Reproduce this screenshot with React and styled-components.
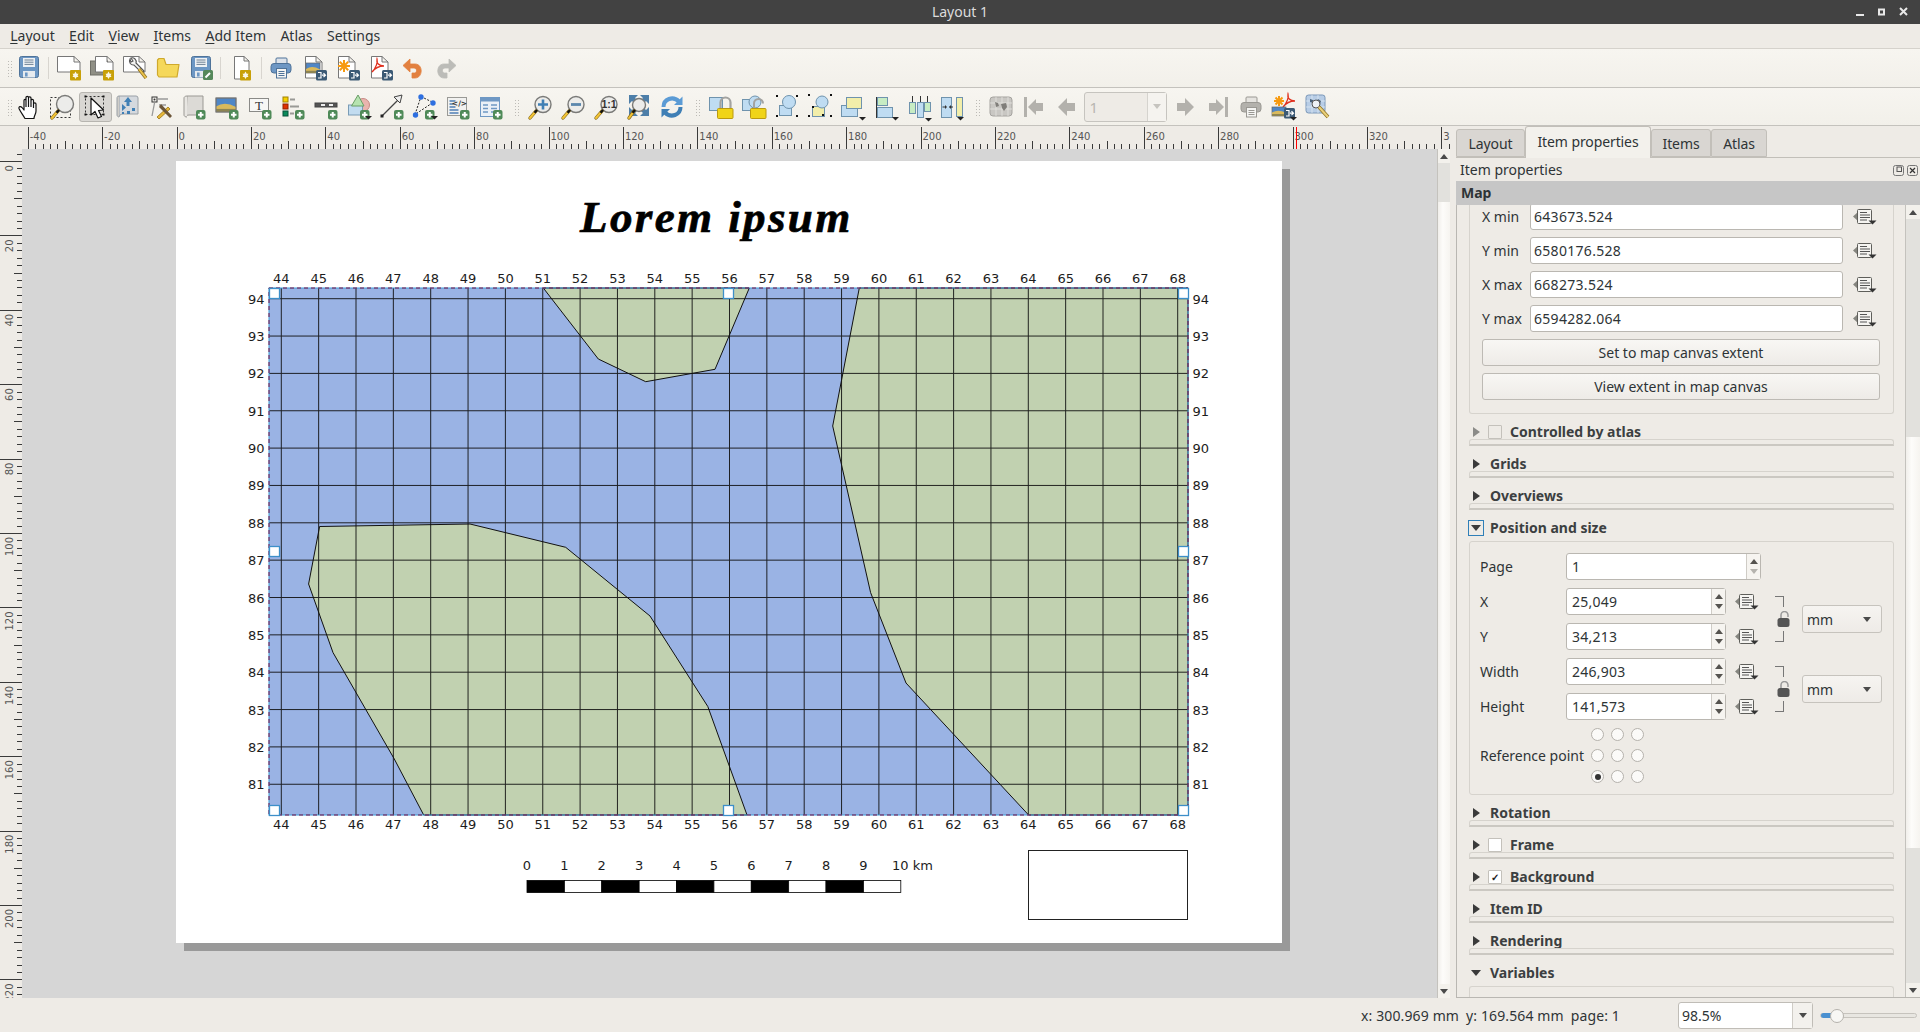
import React from 'react';
import styled, { createGlobalStyle } from 'styled-components';

/*global*/
const Global = createGlobalStyle`
html, body { margin: 0; padding: 0; height: 100%; overflow: hidden; background: #eeebe6; }
#root { height: 100%; }
* { box-sizing: border-box; }
`;

const UI_FONT = '"Noto Sans", "Open Sans", sans-serif';

const Window = styled.div`
width: 1920px;
height: 1032px;
display: flex;
flex-direction: column;
font-family: ${UI_FONT};
font-size: 14px;
color: #2e3436;
background: #eeebe6;
overflow: hidden;
`;

/*title bar*/
const TitleBar = styled.div`
height: 24px;
flex: none;
background: #424242;
color: #dcdcdc;
display: flex;
align-items: center;
justify-content: center;
position: relative;
font-size: 14px;
padding-bottom: 2px;
`;
const WinControls = styled.svg`
position: absolute;
right: 4px;
top: 0;
width: 60px;
height: 24px;
`;

const MenuBar = styled.div`
height: 25px;
flex: none;
display: flex;
align-items: center;
padding: 0 0 2px 3px;
border-bottom: 1px solid #d5d2cc;
`;
const MenuItem = styled.span`
padding: 0 7.2px;
span { text-decoration: underline; text-underline-offset: 2px; text-decoration-thickness: 1px; }
`;

/*toolbars*/
const ToolBar = styled.div`
height: ${p => p.$h}px;
flex: none;
display: flex;
align-items: center;
padding-left: 12.5px;
position: relative;
background: linear-gradient(#f7f5f0, #f2f0ea);
border-bottom: 1px solid #c4c2bd;
`;
const Tool = styled.div`
width: 33px;
height: 30px;
flex: none;
display: flex;
align-items: center;
justify-content: center;
border-radius: 3px;
border: 1px solid ${p => (p.$on ? '#b7b5b0' : 'transparent')};
background: ${p => (p.$on ? '#d9d7d3' : 'transparent')};
`;
const Glyph = styled.svg`
width: 26px;
height: 26px;
flex: none;
overflow: visible;
`;
const Sep = styled.div`
width: ${p => p.$w}px;
height: 22px;
flex: none;
display: flex;
justify-content: center;
&::after { content: ''; width: 1px; background: #d8d5cf; }
`;
const Grip = styled.div`
width: ${p => p.$w}px;
height: 22px;
flex: none;
background-image: radial-gradient(circle, #bdbbb6 0.8px, transparent 1px);
background-size: 3px 3px;
background-repeat: repeat;
background-clip: content-box;
padding: 2px ${p => (p.$w - 6) / 2}px;
`;
const StartGrip = styled(Grip)`
position: absolute;
left: 4px;
top: 8px;
`;
const PageCombo = styled.div`
width: 83px;
height: 30px;
flex: none;
margin-right: 2px;
display: flex;
border: 1px solid #c6c4bf;
border-radius: 3px;
color: #b8b6b1;
font-size: 15px;
background: #eeebe6;
`;
const PageComboValue = styled.div`
flex: 1;
padding-left: 5px;
line-height: 28px;
`;
const PageComboArrow = styled.div`
width: 19px;
border-left: 1px solid #d5d3ce;
background: #f5f3ef;
display: flex;
align-items: center;
justify-content: center;
&::after { content: ''; border: 4px solid transparent; border-top: 5px solid #c6c4bf; border-bottom: 0; }
`;

/*main area*/
const Main = styled.div`
flex: 1;
display: flex;
min-height: 0;
`;
const LayoutPane = styled.div`
width: 1450px;
flex: none;
display: flex;
flex-direction: column;
`;
const HRuler = styled.svg`
display: block;
width: 1450px;
height: 23px;
flex: none;
font-family: "DejaVu Sans", sans-serif;
font-size: 10px;
`;
const CanvasRow = styled.div`
flex: 1;
display: flex;
min-height: 0;
`;
const VRuler = styled.svg`
display: block;
width: 22px;
height: 849px;
flex: none;
font-family: "DejaVu Sans", sans-serif;
font-size: 10px;
`;
const Canvas = styled.div`
width: 1415px;
flex: none;
background: #d6d6d6;
padding: 12px 0 0 154px;
overflow: hidden;
`;
const Sheet = styled.div`
width: 1106px;
height: 782px;
background: #fff;
position: relative;
box-shadow: 8px 8px 0 #999;
`;
const SheetTitle = styled.div`
position: absolute;
left: 404px;
top: 34px;
font: italic bold 45px/1 "Liberation Serif", serif;
letter-spacing: 2.4px;
-webkit-text-stroke: 0.7px #000;
color: #000;
white-space: nowrap;
`;
const MapDrawing = styled.svg`
position: absolute;
left: 54px;
top: 101px;
width: 1000px;
height: 640px;
font-family: "DejaVu Sans", sans-serif;
font-size: 13px;
fill: #1c1c1c;
`;
const LegendBox = styled.div`
position: absolute;
left: 852px;
top: 689px;
width: 160px;
height: 70px;
background: #fff;
border: 1.5px solid #222;
`;

const VScroll = styled.div`
width: ${p => p.$w}px;
flex: none;
display: flex;
flex-direction: column;
background: linear-gradient(90deg, #f1efeb, #fdfcfa 40%, #f6f4f0);
border-left: 1px solid #c4c2bd;
`;
const ScrollBtn = styled.div`
height: 14px;
flex: none;
display: flex;
align-items: center;
justify-content: center;
background: #f3f1ec;
&::after {
  content: '';
  border: 4px solid transparent;
  ${p => (p.$down ? 'border-top: 5px solid #4a4a4a; border-bottom: 0;' : 'border-bottom: 5px solid #4a4a4a; border-top: 0;')}
}
`;
const ScrollTrough = styled.div`
height: ${p => p.$h}px;
flex: ${p => (p.$h ? 'none' : 1)};
background: ${p => (p.$thumb ? 'linear-gradient(90deg, #f1efeb, #fdfcfa 40%, #f6f4f0)' : '#e2e1dd')};
`;

/*side panel*/
const SidePanel = styled.div`
flex: 1;
display: flex;
flex-direction: column;
padding-left: 6px;
min-width: 0;
`;
const TabBar = styled.div`
height: 32px;
flex: none;
display: flex;
align-items: flex-end;
border-bottom: 1px solid #c2bfb9;
`;
const Tab = styled.div`
width: ${p => p.$w}px;
height: ${p => (p.$on ? 32 : 28)}px;
margin-bottom: ${p => (p.$on ? -1 : 0)}px;
padding-bottom: ${p => (p.$on ? 3 : 0)}px;
display: flex;
align-items: center;
justify-content: center;
letter-spacing: -0.1px;
border: 1px solid #c2bfb9;
border-bottom: ${p => (p.$on ? 'none' : '1px solid #c2bfb9')};
border-radius: 3px 3px 0 0;
background: ${p => (p.$on ? '#f3f1ec' : '#d9d6d2')};
color: #2e3436;
`;
const DockTitle = styled.div`
height: 23px;
flex: none;
display: flex;
align-items: center;
justify-content: space-between;
padding: 0 1px 0 4px;
`;
const DockButtons = styled.svg`
width: 26px;
height: 14px;
`;
const MapBar = styled.div`
height: 24px;
flex: none;
background: #c6c6c6;
font-weight: 700;
padding-left: 5px;
line-height: 24px;
color: #2e3436;
`;
const ScrollArea = styled.div`
flex: 1;
min-height: 0;
display: flex;
border-left: 1px solid #b9b7b2;
border-bottom: 1px solid #b9b7b2;
`;
const ScrollContent = styled.div`
width: 448px;
flex: none;
padding-left: 12px;
overflow: hidden;
`;
const ExtentBox = styled.div`
width: 425px;
padding: 0 13px 13px 12px;
border: 1px solid #d6d3cd;
border-top: none;
border-radius: 0 0 3px 3px;
display: flex;
flex-direction: column;
gap: 7px;
`;
const ExtentRow = styled.div`
display: flex;
align-items: center;
height: 27px;
flex: none;
&:first-child { margin-top: -2px; }
`;
const ExtentLabel = styled.div`
width: 48px;
flex: none;
`;
const LineEdit = styled.div`
width: ${p => p.$w}px;
height: 27px;
flex: none;
background: #fff;
border: 1px solid #bab7b1;
border-radius: 3px;
padding-left: 3px;
line-height: 25px;
font-size: 14px;
letter-spacing: 0.3px;
`;
const DDButton = styled.svg`
width: 24px;
height: 16px;
flex: none;
margin-left: ${p => p.$gap || 0}px;
`;
const PushButton = styled.div`
width: 398px;
height: 27px;
flex: none;
border: 1px solid #bdbab4;
border-radius: 3px;
background: linear-gradient(#f8f7f4, #eeebe7);
display: flex;
align-items: center;
justify-content: center;
`;
const GroupHead = styled.div`
width: 425px;
height: ${p => (p.$open ? 31 : 32)}px;
flex: none;
position: relative;
display: flex;
align-items: center;
padding-top: ${p => (p.$open ? 4 : 3)}px;
font-weight: 700;
color: #3c3f41;
${p => !p.$open && `
  &::after {
    content: '';
    position: absolute;
    left: 0;
    right: 0;
    bottom: 0;
    height: 4px;
    border: 1px solid #d6d3cd;
    border-bottom: 2px solid #cbc8c2;
    border-radius: 3px 3px 0 0;
    background: #eeebe6;
  }
`}
`;
const ArrowSlot = styled.div`
width: 16px;
height: 16px;
flex: none;
margin-left: -1px;
margin-right: ${p => (p.$check ? 4 : 6)}px;
display: flex;
align-items: center;
justify-content: center;
border: 1px solid ${p => (p.$focus ? '#2f7fb8' : 'transparent')};
&::after {
  content: '';
  ${p => (p.$open
    ? `border-left: 5px solid transparent; border-right: 5px solid transparent; border-top: 6px solid #3a3a3a;`
    : `border-top: 5px solid transparent; border-bottom: 5px solid transparent; border-left: 7px solid ${p.$dim ? '#8b8b88' : '#3a3a3a'};`)}
}
`;
const CheckBox = styled.div`
width: 14px;
height: 14px;
flex: none;
margin-right: 8px;
border: 1px solid #c4c1bb;
border-radius: 1px;
background: ${p => (p.$dim ? 'transparent' : '#fff')};
display: flex;
align-items: center;
justify-content: center;
font-size: 10px;
line-height: 1;
font-weight: 700;
color: #222;
`;
const PosBox = styled.div`
width: 425px;
height: 254px;
flex: none;
border: 1px solid #d6d3cd;
border-radius: 3px;
padding: 11px 0 0 10px;
`;
const PosGrid = styled.div`
display: grid;
grid-template-columns: 86px 160px 42px 34px 80px;
grid-auto-rows: 27px;
row-gap: 8px;
align-items: center;
`;
const SpinBox = styled.div`
width: ${p => p.$w}px;
height: 27px;
display: flex;
background: #fff;
border: 1px solid #bab7b1;
border-radius: 3px;
`;
const SpinValue = styled.div`
flex: 1;
padding-left: 5px;
line-height: 25px;
letter-spacing: 0.25px;
`;
const SpinArrows = styled.div`
width: 14px;
flex: none;
border-left: 1px solid #cfccc6;
background: #f6f4f0;
display: flex;
flex-direction: column;
align-items: center;
justify-content: center;
gap: 5px;
`;
const SpinUp = styled.div`
border: 4px solid transparent;
border-top: 0;
border-bottom: 5px solid #55534f;
`;
const SpinDown = styled.div`
border: 4px solid transparent;
border-bottom: 0;
border-top: 5px solid ${p => (p.$dim ? '#b5b3ae' : '#55534f')};
`;
const LockCell = styled.div`
grid-row: span 2;
height: 62px;
padding: 8px 0 0 7px;
display: flex;
flex-direction: column;
`;
const Bracket = styled.div`
width: 9px;
height: 11px;
flex: none;
border-right: 1.5px solid #777;
${p => (p.$bottom ? 'border-bottom: 1.5px solid #777;' : 'border-top: 1.5px solid #777;')}
`;
const LockIcon = styled.svg`
width: 13px;
height: 16px;
margin: 4px 0 4px 2px;
flex: none;
`;
const UnitCell = styled.div`
grid-row: span 2;
`;
const UnitCombo = styled.div`
width: 80px;
height: 28px;
border: 1px solid #c6c3bd;
border-radius: 3px;
background: linear-gradient(#f6f4f1, #eeebe7);
display: flex;
align-items: center;
justify-content: space-between;
padding: 0 10px 0 4px;
&::after { content: ''; border: 4px solid transparent; border-top: 5px solid #4a4a4a; border-bottom: 0; }
`;
const RefRow = styled.div`
display: flex;
align-items: center;
margin-top: 8px;
`;
const RefLabel = styled.div`
width: 111px;
flex: none;
`;
const RadioGrid = styled.div`
display: grid;
grid-template-columns: repeat(3, 13px);
grid-auto-rows: 13px;
column-gap: 7px;
row-gap: 8px;
`;
const Radio = styled.div`
width: 13px;
height: 13px;
border-radius: 50%;
border: 1px solid #b5b2ac;
background: #fbfaf8;
display: flex;
align-items: center;
justify-content: center;
&::after { content: ''; width: 6px; height: 6px; border-radius: 50%; background: ${p => (p.$on ? '#333' : 'transparent')}; }
`;
const VarBox = styled.div`
width: 425px;
height: 14px;
flex: none;
border: 1px solid #d6d3cd;
border-bottom: none;
border-radius: 3px 3px 0 0;
`;

/*status bar*/
const StatusBar = styled.div`
height: 34px;
flex: none;
display: flex;
align-items: center;
padding-right: 3px;
`;
const Coord = styled.span`
margin-right: ${p => p.$gap}px;
white-space: nowrap;
letter-spacing: 0.12px;
`;
const CoordGroup = styled.div`
margin-left: auto;
display: flex;
margin-right: 58px;
`;
const ZoomCombo = styled.div`
width: 135px;
height: 27px;
flex: none;
display: flex;
background: #fff;
border: 1px solid #c0bdb7;
border-radius: 3px;
`;
const ZoomValue = styled.div`
flex: 1;
padding-left: 3px;
line-height: 25px;
`;
const ZoomArrow = styled.div`
width: 20px;
border-left: 1px solid #cfccc6;
background: #f3f1ed;
display: flex;
align-items: center;
justify-content: center;
&::after { content: ''; border: 4px solid transparent; border-top: 5px solid #4a4a4a; border-bottom: 0; }
`;
const Slider = styled.div`
width: 97px;
height: 5px;
flex: none;
margin-left: 7px;
border: 1px solid #c6c3bd;
border-radius: 3px;
background: #e8e6e1;
position: relative;
&::before {
  content: '';
  position: absolute;
  left: 0;
  top: -1px;
  width: 12px;
  height: 5px;
  background: #4a90d0;
  border-radius: 3px;
}
&::after {
  content: '';
  position: absolute;
  left: 9px;
  top: -5px;
  width: 12px;
  height: 12px;
  border-radius: 50%;
  border: 1px solid #b5b2ac;
  background: #f8f7f4;
}
`;

/*icon parts*/
const plus = (x = 15, y = 16) => (
  <g transform={`translate(${x} ${y})`}>
    <rect width="9.5" height="9.5" rx="2" fill="#4f8a58" />
    <path d="M4.75 2v5.5M2 4.75h5.5" stroke="#fff" strokeWidth="2" />
  </g>
);
const star = (x = 16, y = 15) => (
  <g transform={`translate(${x} ${y})`}>
    <rect width="11" height="10.5" rx="1" fill="#c8a008" />
    <path d="M5.5 1.5 8.5 7H2.5ZM5.5 9 2.5 3.7H8.5Z" fill="#fff" opacity=".9" />
  </g>
);
const exportBadge = (x = 15, y = 15) => (
  <g transform={`translate(${x} ${y})`}>
    <rect width="11" height="10.5" rx="1.5" fill="#3c5a75" />
    <path d="M2 2.5h3v5.5H2M6 5.2h3.5M7.5 3.2l2 2-2 2" stroke="#fff" strokeWidth="1.2" fill="none" />
  </g>
);
const dropTri = (x = 19, y = 22) => <path d={`M${x} ${y}h7l-3.5 3.5Z`} fill="#222" />;
const sheet = (x, y, w, h, fold = 6) => (
  <path d={`M${x + .5} ${y + .5}H${x + w - fold}L${x + w} ${y + fold}V${y + h}H${x + .5}ZM${x + w - fold} ${y + .5}V${y + fold}H${x + w}`} fill="#fff" stroke="#777" />
);
const handle = (x1 = 9, y1 = 17, x2 = 3, y2 = 24) => (
  <g>
    <path d={`M${x1} ${y1}L${x2} ${y2}`} stroke="#8a6d1c" strokeWidth="3.4" strokeLinecap="round" />
    <path d={`M${x1} ${y1}L${x2} ${y2}`} stroke="#f2c436" strokeWidth="2" strokeLinecap="round" />
    <path d={`M${x1 + 1} ${y1 - 1}L${x1 - 1.5} ${y1 + 1.8}`} stroke="#111" strokeWidth="2.4" />
  </g>
);
const lens = (cx = 16, cy = 10.5, r = 8) => <circle cx={cx} cy={cy} r={r} fill="#ececea" stroke="#7a7a78" strokeWidth="1.4" />;
const floppy = (x = 3) => (
  <g transform={`translate(${x} 1)`}>
    <rect x=".5" y=".5" width="19" height="21" rx="2" fill="#6d97c4" stroke="#4f7399" />
    <rect x="4" y="2" width="12" height="9" fill="#eef1f4" />
    <path d="M5.5 4h9M5.5 6.2h9M5.5 8.4h9" stroke="#6f8194" />
    <rect x="4" y="15" width="12" height="6.5" fill="#e7ebef" />
    <rect x="6" y="16.5" width="2.6" height="4" fill="#6d97c4" />
  </g>
);
const printer = (c1, c2, c3) => (
  <g>
    <rect x="8" y="3" width="11" height="7" rx="1" fill={c3} stroke={c2} />
    <rect x="3" y="8.5" width="20" height="9.5" rx="3" fill={c1} stroke={c2} />
    <rect x="8.5" y="13.5" width="10" height="9.5" fill="#f5f5f3" stroke={c2} />
    <path d="M10.5 16.5h6M10.5 18.5h6M10.5 20.5h6" stroke={c2} />
  </g>
);
const imgScene = (x, y, w, h) => (
  <g>
    <rect x={x} y={y} width={w} height={h} fill="#4f86c6" stroke="#666" strokeWidth=".7" />
    <path d={`M${x} ${y + h}V${y + h * .6}Q${x + w * .45} ${y + h * .2} ${x + w} ${y + h * .65}V${y + h}Z`} fill="#d9b95c" />
    <rect x={x} y={y + h * .78} width={w} height={h * .22} fill="#8d8452" />
  </g>
);
const asterisk = (cx, cy, r) => (
  <path d={`M${cx} ${cy - r}V${cy + r}M${cx - r} ${cy}H${cx + r}M${cx - r * .7} ${cy - r * .7}L${cx + r * .7} ${cy + r * .7}M${cx + r * .7} ${cy - r * .7}L${cx - r * .7} ${cy + r * .7}`} stroke="#f79a10" strokeWidth="2" />
);
const acrobat = (ox, oy) => (
  <path d={`M${ox} ${oy + 13}C${ox + 4} ${oy + 9} ${ox + 6} ${oy + 3} ${ox + 5} ${oy}C${ox + 4} ${oy + 4} ${ox + 7} ${oy + 7} ${ox + 12} ${oy + 7}C${ox + 8} ${oy + 7} ${ox + 3} ${oy + 9} ${ox} ${oy + 13}Z`} fill="none" stroke="#e0301e" strokeWidth="1.3" />
);
const undoShape = c => (
  <path d="M10 4 3 10.5 10 17V13H14C17 13 17.5 17.5 14.5 18H12V23H15C23 23 23.5 9 15 9H10Z" fill={c} stroke={c} strokeWidth=".8" strokeLinejoin="round" />
);
const dottedBox = (x, y, s) => (
  <rect x={x} y={y} width={s} height={s} fill="none" stroke="#333" strokeDasharray="2 2" />
);
const cornerDots = (x, y, w, h) => (
  <path d={`M${x} ${y}h2v2h-2ZM${x + w - 2} ${y}h2v2h-2ZM${x} ${y + h - 2}h2v2h-2ZM${x + w - 2} ${y + h - 2}h2v2h-2Z`} fill="#111" />
);
const lockOverlay = open => (
  <g>
    {open
      ? <path d="M13 14V9.5a4.5 4.5 0 0 1 9 0" fill="none" stroke="#a3a3a0" strokeWidth="2" />
      : <path d="M12.5 15V8.5a5 5 0 0 1 10 0V15" fill="none" stroke="#a3a3a0" strokeWidth="2.2" />}
    <rect x="9.5" y="14.5" width="15.5" height="10" rx="1" fill="#f0d418" stroke="#bb9a10" />
  </g>
);
const blueBox = (x, y, w, h, c = '#bfdcf2') => <rect x={x + .5} y={y + .5} width={w} height={h} fill={c} stroke="#6f93ad" />;

const icons = {
  save: floppy(3),
  newLayout: <g>{sheet(3, 1, 23, 16)}{star()}</g>,
  duplicate: <g><rect x="3.5" y="6" width="17" height="14" fill="#8f8f85" stroke="#6e6e66" />{sheet(8, 1, 18, 16)}{star()}</g>,
  manager: (
    <g>
      {sheet(3, 1, 22, 16)}
      <path d="M10 4a4 4 0 0 0 4 6l8 8 2-2-8-8a4 4 0 0 0-5-5l2 3-2 1Z" fill="#f4f4f2" stroke="#555" strokeWidth="1.1" />
      <path d="M19 14l7 9" stroke="#8a6d1c" strokeWidth="3.4" /><path d="M19 14l7 9" stroke="#eac24c" strokeWidth="2" />
    </g>
  ),
  folder: <path d="M4.5 5V20L6 22H24L26 9.5H13L11 3.5H6Z" fill="#f5d85a" stroke="#cfa92c" strokeWidth="1.2" strokeLinejoin="round" />,
  saveAs: (
    <g>
      {floppy(5)}
      <rect x="17" y="15" width="10" height="10" rx="1.5" fill="#55885a" />
      <path d="M19.5 22.5 24 18" stroke="#fff" strokeWidth="2" />
    </g>
  ),
  newPage: <g>{sheet(6, 1, 15, 23, 5)}{star(12, 15)}</g>,
  print: printer('#6d97c4', '#4f7399', '#dde3ea'),
  exportImg: <g>{sheet(4, 1, 17, 22)}{imgScene(5, 8, 14, 10)}{exportBadge()}</g>,
  exportSvg: <g>{sheet(4, 1, 17, 22)}{asterisk(10, 11, 6)}{exportBadge()}</g>,
  exportPdf: <g>{sheet(4, 1, 17, 22)}{acrobat(5, 4)}{exportBadge()}</g>,
  undo: undoShape('#e2803f'),
  redo: <g transform="matrix(-1 0 0 1 26 0)">{undoShape('#bcbcb8')}</g>,
  hand: (
    <path d="M9 24.5C7 21 4.5 18 3 14.5 2.5 12.5 4.5 12 6 13.5L8 16V6.5C8 5 10 5 10 6.5V3.5C10 2 12.5 2 12.5 3.5V3.8C12.5 2.5 15 2.5 15 4V6.5C15 5 17.5 5 17.5 6.5V10C17.5 8.5 20 8.5 20 10V17C20 20 18 22 18 24.5ZM10 6.5V13M12.5 3.8V13M15 6.5V13M17.5 10V14" fill="#fff" stroke="#111" strokeWidth="1.2" strokeLinejoin="round" />
  ),
  zoomSel: <g>{dottedBox(1.5, 3.5, 20)}{lens(16, 10, 8.5)}{handle(9, 17, 3, 24)}</g>,
  select: <g>{dottedBox(3.5, 2.5, 18)}{cornerDots(2.5, 1.5, 20, 20)}<path d="M9 4 9 21 13 17.5 16 24 19.5 22.5 16.5 16.5 21.5 16Z" fill="#fff" stroke="#111" strokeWidth="1.2" strokeLinejoin="round" /></g>,
  moveContent: (
    <g>
      <path d="M4 2h17a2 2 0 0 1 2 2v16H8c-3 0-4 2-4 3Z" fill="#d5d9de" stroke="#9aa0a6" />
      <path d="M4 2c-2 0-2 2-2 2v17c0 1 1 2 2 2" fill="#cfcdc8" stroke="#9aa0a6" />
      <path d="M13 3l4 5h-2.5v4h-3V8H9ZM7 10v7l4-3.5ZM17 14h3v3h-3ZM12 17h3v3h-3ZM7 18h2v2H7Z" fill="#3f7fb5" />
    </g>
  ),
  editNodes: (
    <g>
      <rect x="4" y="3" width="5" height="5" fill="none" stroke="#333" /><circle cx="6.5" cy="5.5" r="1" fill="#333" />
      <path d="M10 5h10M4 22 6.5 9M11 11h7" stroke="#999" strokeWidth="1.3" />
      <path d="M9 23l11-10 2 2-11 10Z" fill="#e8b83a" stroke="#977414" strokeWidth=".8" />
      <path d="M13 10l11 12-2 2L11 13Z" fill="#6b5538" />
    </g>
  ),
  addMap: <g><path d="M6 2h16v19H8c-2 0-3 1-3 2Z" fill="#dcdad6" stroke="#9b9994" /><path d="M6 2C4 2 3 3 3 4v17c0 1 1 2 3 2" fill="#e8e6e2" stroke="#9b9994" />{plus()}</g>,
  addPic: <g>{imgScene(2, 4, 20, 14)}<rect x="2" y="4" width="20" height="14" fill="none" stroke="#777" />{plus()}</g>,
  addLabel: <g><rect x="2.5" y="4.5" width="19" height="13" fill="#f7f7f5" stroke="#8a8a87" /><text x="12" y="15.5" textAnchor="middle" fontFamily="Liberation Serif" fontSize="13" fill="#333">T</text>{plus()}</g>,
  addLegend: (
    <g>
      <rect x="3" y="3" width="5" height="5" fill="#f5d000" stroke="#a08000" /><rect x="3" y="10" width="5" height="5" fill="#e03000" stroke="#902000" /><rect x="3" y="17" width="5" height="5" fill="#0a8a5a" stroke="#04503a" />
      <path d="M10 5.5h5M10 12.5h9M10 19.5h4" stroke="#9a9a96" strokeWidth="2" />{plus()}
    </g>
  ),
  addScale: <g><rect x="2" y="9" width="22" height="4" fill="#555" stroke="#444" /><path d="M8 11h4M16 11h4" stroke="#eee" strokeWidth="2" />{plus()}</g>,
  addShape: (
    <g>
      <circle cx="17" cy="11" r="6.5" fill="#eab4ae" stroke="#c78a84" />
      <rect x="2.5" y="11" width="14" height="10" fill="#c2dcf0" stroke="#7a9cb6" />
      <path d="M12 1 18 12H5.5Z" fill="#b6e3b0" stroke="#6a9e66" />{plus(14, 16)}{dropTri(19, 22)}
    </g>
  ),
  addArrow: <g><path d="M3 22 19 6" stroke="#444" strokeWidth="1.3" /><rect x="1.5" y="20.5" width="3" height="3" fill="#222" /><path d="M23 1l-2 8-6-6Z" fill="#eee" stroke="#444" />{plus()}</g>,
  addNodes: (
    <g>
      <path d="M9 2.5 21 8.5 3 20.5Z" fill="none" stroke="#222" strokeDasharray="2 1.5" />
      <circle cx="9" cy="3" r="2.7" fill="#2e6fe0" /><circle cx="21" cy="9" r="2.7" fill="#2e6fe0" /><circle cx="3.5" cy="21" r="2.7" fill="#2e6fe0" />{plus(13, 16)}{dropTri(19, 22)}
    </g>
  ),
  addHtml: (
    <g>
      <rect x="2.5" y="3.5" width="19" height="18" fill="#f2f2f0" stroke="#9a9a96" />
      <path d="M4.5 7h6M4.5 10h4M4.5 13h6M4.5 16h9M4.5 19h9" stroke="#4f7fb5" strokeWidth="1.6" />
      <text x="14.5" y="11.5" textAnchor="middle" fontFamily="DejaVu Sans" fontSize="7.5" fontWeight="700" fill="#333">&lt;/&gt;</text>{plus()}
    </g>
  ),
  addTable: (
    <g>
      <rect x="2.5" y="3.5" width="19" height="19" fill="#eaf0f7" stroke="#6f98c4" />
      <rect x="2.5" y="3.5" width="19" height="4" fill="#6f98c4" />
      <path d="M5 11h5M13 11h6M5 14.5h5M13 14.5h6M5 18h5M13 18h6" stroke="#6f98c4" strokeWidth="1.3" />{plus()}
    </g>
  ),
  zoomIn: <g>{lens()}<path d="M16 5.5v10M11 10.5h10" stroke="#3f7fb5" strokeWidth="2.6" />{handle()}</g>,
  zoomOut: <g>{lens()}<path d="M11 10.5h10" stroke="#5b87ad" strokeWidth="2.8" />{handle()}</g>,
  zoom1: <g>{lens()}<text x="16" y="14.2" textAnchor="middle" fontFamily="Liberation Sans" fontSize="10.5" fontWeight="700" fill="#333">1:1</text>{handle()}</g>,
  zoomFull: (
    <g>
      <path d="M3 1h9l-3 3 3 3-3 3-3-3-3 3ZM23 1h-9l3 3-3 3 3 3 3-3 3 3ZM3 22h9l-3-3 3-3-3-3-3 3-3-3ZM23 22h-9l3-3-3-3 3-3 3 3 3-3Z" fill="#4d7ea8" />
      {lens(13, 11, 6.5)}{handle(8, 17, 3, 24)}
    </g>
  ),
  refresh: (
    <g fill="none" strokeWidth="4">
      <path d="M4.5 13C4.5 5 14 1.5 20 7.5" stroke="#5b9bd5" />
      <path d="M21.5 13C21.5 21 12 24.5 6 18.5" stroke="#3f7fb5" />
      <path d="M23.5 2.5V11H15Z" fill="#5b9bd5" stroke="none" />
      <path d="M2.5 23.5V15H11Z" fill="#3f7fb5" stroke="none" />
    </g>
  ),
  lock: <g>{blueBox(1, 3, 13, 13)}{lockOverlay(false)}</g>,
  unlock: <g>{blueBox(1, 5, 10, 11)}<circle cx="14" cy="8" r="6" fill="#bfdcf2" stroke="#6f93ad" />{lockOverlay(true)}</g>,
  group: <g>{blueBox(5, 11, 12, 10)}<circle cx="15" cy="8" r="6.5" fill="#bfdcf2" stroke="#6f93ad" />{cornerDots(2, 1, 22, 22)}</g>,
  ungroup: <g>{blueBox(5, 12, 12, 10, '#f2eeaa')}<circle cx="15" cy="8" r="6" fill="#bfdcf2" stroke="#6f93ad" />{cornerDots(1, 0, 24, 23)}<path d="M5 12h2v2H5ZM15 20h2v2h-2Z" fill="#111" /></g>,
  raise: <g>{blueBox(1, 11, 16, 11)}{blueBox(6, 3, 15, 11, '#f2eeaa')}{dropTri(19, 23)}</g>,
  align: <g><path d="M3.5 3v21" stroke="#333" />{blueBox(4, 3, 10, 8, '#c7ecc3')}{blueBox(4, 13, 15, 10)}{dropTri(19, 23)}</g>,
  distribute: <g><path d="M6.5 2v8M14.5 2v8M21.5 2v8" stroke="#333" />{blueBox(3, 8, 6, 11, '#c7ecc3')}{blueBox(11, 8, 6, 15)}{blueBox(18, 8, 6, 9, '#c7ecc3')}{dropTri(19, 24)}</g>,
  resize: <g>{blueBox(2, 3, 10, 20)}{blueBox(17, 3, 6, 19, '#f2eeaa')}<path d="M3.5 13l3.5 0M14 13h-3.5" stroke="#333" /><path d="M8 13l-2-2v4ZM10 13l2-2v4Z" fill="#333" />{dropTri(18, 23)}</g>,
  atlasPreview: (
    <g>
      <rect x="2" y="3" width="22" height="19" rx="3" fill="#c9c7c3" stroke="#a5a39f" />
      <path d="M2 9h22M2 15h22M8 3v19M14 3v19M20 3v19" stroke="#e6e4e0" strokeWidth=".8" />
      <path d="M7 8l3 1 1 3-3 1ZM13 10l5-1 1 4-3 4-2-3Z" fill="#807e7a" />
    </g>
  ),
  first: <path d="M3 3h3v20H3ZM7 13l8-8v4h7v8h-7v4Z" fill="#b3b1ac" />,
  prev: <path d="M4 13l9-9v5h8v8h-8v5Z" fill="#b3b1ac" />,
  next: <path d="M22 13l-9-9v5H5v8h8v5Z" fill="#b3b1ac" />,
  last: <path d="M23 3h-3v20h3ZM19 13l-8-8v4H4v8h7v4Z" fill="#b3b1ac" />,
  printGray: printer('#b3b1ac', '#9a9893', '#e6e4e0'),
  exportMulti: (
    <g>
      {asterisk(8, 7, 5)}{acrobat(12, 0)}
      {imgScene(1, 13, 14, 9)}{exportBadge(13, 14)}{dropTri(19, 23)}
    </g>
  ),
  atlasSettings: (
    <g>
      <rect x="2" y="1" width="19" height="18" rx="2.5" fill="#b8cde6" stroke="#7a97b8" />
      <path d="M2 7h19M2 13h19M8 1v18M14 1v18" stroke="#dde8f3" strokeWidth=".8" />
      <path d="M6 5l3 1 0 3-3-1ZM12 8l2-3 3 2-1 3Z" fill="#49617a" />
      <circle cx="12" cy="10" r="4" fill="#eef2f6" stroke="#555" />
      <path d="M15 13l9 10" stroke="#8a6d1c" strokeWidth="3.6" /><path d="M15 13l9 10" stroke="#e9cf7a" strokeWidth="2.2" />
    </g>
  ),
};

const Icon = ({ name, on }) => (
  <Tool $on={on}><Glyph viewBox="0 0 26 26">{icons[name]}</Glyph></Tool>
);

/*drawings*/
const TitleButtons = () => (
  <WinControls viewBox="0 0 60 24">
    <path d="M0 15h8" stroke="#e8e8e8" strokeWidth="2" />
    <rect x="23" y="9.5" width="5" height="5" fill="none" stroke="#e8e8e8" strokeWidth="2" />
    <path d="M44 8l7 7M51 8l-7 7" stroke="#e8e8e8" strokeWidth="2" />
  </WinControls>
);

const DataDefined = ({ gap }) => (
  <DDButton viewBox="0 0 24 16" $gap={gap}>
    <path d="M0 7.5 6 2V13Z" fill="#85857f" />
    <rect x="4.5" y=".5" width="14" height="14" rx="1" fill="#f5f4f1" stroke="#5e5e5a" />
    <path d="M7 3.5h7M7 6h10M7 8.5h10M7 11h7" stroke="#555" />
    <path d="M15.5 11.5h8l-4 4Z" fill="#333" />
  </DDButton>
);

const tickPath = (fn, mmFrom, mmTo, k, o) => {
  let d = '';
  for (let mm = mmFrom; mm <= mmTo; mm += 2) {
    const v = Math.round(o + mm * k) + 0.5;
    if (mm % 20 === 0) d += fn(v, 0);
    else if (mm % 10 === 0) d += fn(v, 1);
    else d += fn(v, 2);
  }
  return d;
};

const RulerTop = () => {
  const k = 3.72;
  const x0 = 176.5;
  const labels = [];
  for (let mm = -40; mm <= 340; mm += 20) labels.push(mm);
  const d = tickPath((x, t) => `M${x} ${[1, 15, 18][t]}V23`, -40, 344, k, x0);
  return (
    <HRuler viewBox="0 0 1450 23">
      <path d={d} stroke="#3a3a3a" fill="none" />
      {labels.map(mm => (
        <text key={mm} x={x0 + mm * k + 2} y="14" fill="#555">{mm}</text>
      ))}
      <path d="M1296.5 1V23" stroke="#f00" />
    </HRuler>
  );
};

const RulerLeft = () => {
  const k = 3.72;
  const y0 = 12;
  const labels = [];
  for (let mm = 0; mm <= 220; mm += 20) labels.push(mm);
  const d = tickPath((y, t) => `M${[0, 14, 17][t]} ${y}H22`, -2, 226, k, y0);
  return (
    <VRuler viewBox="0 0 22 849">
      <path d={d} stroke="#3a3a3a" fill="none" />
      {labels.map(mm => (
        <text key={mm} transform={`translate(13 ${y0 + mm * k + 4}) rotate(-90)`} textAnchor="end" fill="#555">{mm}</text>
      ))}
    </VRuler>
  );
};

const MapFrame = () => {
  const xs = Array.from({ length: 25 }, (_, i) => i);
  const ys = Array.from({ length: 14 }, (_, i) => i);
  const gx = i => 281.3 + i * 37.35;
  const gy = i => 298.7 + i * 37.35;
  const handles = [[269, 288], [723, 288], [1178, 288], [269, 546], [1178, 546], [269, 805], [723, 805], [1178, 805]];
  const scale = Array.from({ length: 10 }, (_, i) => i);
  return (
    <MapDrawing viewBox="230 262 1000 640">
      <rect x="269" y="288" width="919" height="527" fill="#9ab3e4" />
      <g fill="#c1d1b0" stroke="#111" strokeWidth="1">
        <path d="M543.3 288 598.3 359 645.7 381.7 715 369.3 749.3 288Z" />
        <path d="M859.3 288 832.7 426 870.6 592.6 906 683 1028.6 815H1188V288Z" />
        <path d="M319.6 526.5 470 524 565.7 547.3 650 616 707.8 706.5 747 815H423.7L394.3 759 333 652.6 308.6 584Z" />
      </g>
      <g stroke="#111" strokeWidth="1" opacity=".9">
        {xs.map(i => <line key={i} x1={gx(i)} y1="288" x2={gx(i)} y2="815" />)}
        {ys.map(i => <line key={i} x1="269" y1={gy(i)} x2="1188" y2={gy(i)} />)}
      </g>
      <g textAnchor="middle">
        {xs.map(i => <text key={i} x={gx(i)} y="283">{44 + i}</text>)}
        {xs.map(i => <text key={i} x={gx(i)} y="829">{44 + i}</text>)}
      </g>
      {ys.map(i => <text key={i} x="264.5" y={gy(i) + 5} textAnchor="end">{94 - i}</text>)}
      {ys.map(i => <text key={i} x="1192.5" y={gy(i) + 5}>{94 - i}</text>)}
      <rect x="269" y="288" width="919" height="527" fill="none" stroke="#3d9bd6" />
      <rect x="269" y="288" width="919" height="527" fill="none" stroke="#7a0f45" strokeDasharray="4 3" />
      {handles.map(([x, y]) => (
        <rect key={`${x}-${y}`} x={x + .5} y={y + .5} width="10" height="10" fill="#fff" stroke="#3d8fc9" strokeWidth="1.3" />
      ))}
      {scale.map(i => (
        <rect key={i} x={527 + i * 37.38} y="880.5" width="37.38" height="12" fill={i % 2 ? '#fff' : '#000'} stroke="#000" strokeWidth=".8" />
      ))}
      <g textAnchor="middle">
        {scale.map(i => <text key={i} x={527 + i * 37.38} y="870">{i}</text>)}
      </g>
      <text x="892" y="870">10 km</text>
    </MapDrawing>
  );
};

const Group = ({ title, check, dim, dimBox }) => (
  <GroupHead>
    <ArrowSlot $dim={dim} $check={check} />
    {check && <CheckBox $dim={dimBox}>{check === 'on' ? '✓' : ''}</CheckBox>}
    {title}
  </GroupHead>
);

const Spin = ({ value, w = 160, dimDown }) => (
  <SpinBox $w={w}>
    <SpinValue>{value}</SpinValue>
    <SpinArrows><SpinUp /><SpinDown $dim={dimDown} /></SpinArrows>
  </SpinBox>
);

const LockedPair = () => (
  <LockCell>
    <Bracket />
    <LockIcon viewBox="0 0 13 16">
      <path d="M4 7V4a3.5 3.5 0 0 1 7 0v2" fill="none" stroke="#999" strokeWidth="1.5" />
      <rect x="0.5" y="7" width="12" height="9" rx="2.5" fill="#555" />
    </LockIcon>
    <Bracket $bottom />
  </LockCell>
);

const extent = [['X min', '643673.524'], ['Y min', '6580176.528'], ['X max', '668273.524'], ['Y max', '6594282.064']];
const radios = [0, 1, 2, 3, 4, 5, 6, 7, 8];

function App() {
  return (
    <Window>
      <Global />
      <TitleBar>
        Layout 1
        <TitleButtons />
      </TitleBar>
      <MenuBar>
        <MenuItem><span>L</span>ayout</MenuItem>
        <MenuItem><span>E</span>dit</MenuItem>
        <MenuItem><span>V</span>iew</MenuItem>
        <MenuItem><span>I</span>tems</MenuItem>
        <MenuItem><span>A</span>dd Item</MenuItem>
        <MenuItem>Atlas</MenuItem>
        <MenuItem>Settings</MenuItem>
      </MenuBar>

      {/*toolbar 1*/}
      <ToolBar $h={39}>
        <StartGrip $w={12} />
        <Icon name="save" />
        <Sep $w={5} />
        <Icon name="newLayout" />
        <Icon name="duplicate" />
        <Icon name="manager" />
        <Icon name="folder" />
        <Icon name="saveAs" />
        <Sep $w={9} />
        <Icon name="newPage" />
        <Sep $w={7} />
        <Icon name="print" />
        <Icon name="exportImg" />
        <Icon name="exportSvg" />
        <Icon name="exportPdf" />
        <Icon name="undo" />
        <Icon name="redo" />
      </ToolBar>

      {/*toolbar 2*/}
      <ToolBar $h={38}>
        <StartGrip $w={12} />
        <Icon name="hand" />
        <Icon name="zoomSel" />
        <Icon name="select" on />
        <Icon name="moveContent" />
        <Icon name="editNodes" />
        <Icon name="addMap" />
        <Icon name="addPic" />
        <Icon name="addLabel" />
        <Icon name="addLegend" />
        <Icon name="addScale" />
        <Icon name="addShape" />
        <Icon name="addArrow" />
        <Icon name="addNodes" />
        <Icon name="addHtml" />
        <Icon name="addTable" />
        <Grip $w={16} />
        <Icon name="zoomIn" />
        <Icon name="zoomOut" />
        <Icon name="zoom1" />
        <Icon name="zoomFull" />
        <Icon name="refresh" />
        <Grip $w={16} />
        <Icon name="lock" />
        <Icon name="unlock" />
        <Icon name="group" />
        <Icon name="ungroup" />
        <Icon name="raise" />
        <Icon name="align" />
        <Icon name="distribute" />
        <Icon name="resize" />
        <Grip $w={16} />
        <Icon name="atlasPreview" />
        <Icon name="first" />
        <Icon name="prev" />
        <PageCombo>
          <PageComboValue>1</PageComboValue>
          <PageComboArrow />
        </PageCombo>
        <Icon name="next" />
        <Icon name="last" />
        <Icon name="printGray" />
        <Icon name="exportMulti" />
        <Icon name="atlasSettings" />
      </ToolBar>

      <Main>
        <LayoutPane>
          <RulerTop />
          <CanvasRow>
            <RulerLeft />
            <Canvas>
              <Sheet>
                <SheetTitle>Lorem ipsum</SheetTitle>
                <MapFrame />
                <LegendBox />
              </Sheet>
            </Canvas>
            <VScroll $w={13}>
              <ScrollBtn />
              <ScrollTrough $h={39} />
              <ScrollTrough $thumb />
              <ScrollBtn $down />
            </VScroll>
          </CanvasRow>
        </LayoutPane>

        <SidePanel>
          <TabBar>
            <Tab $w={69}>Layout</Tab>
            <Tab $w={126} $on>Item properties</Tab>
            <Tab $w={60}>Items</Tab>
            <Tab $w={56}>Atlas</Tab>
          </TabBar>
          <DockTitle>
            Item properties
            <DockButtons viewBox="0 0 26 14">
              <rect x=".5" y="2.5" width="10" height="10" rx="2" fill="none" stroke="#777" />
              <rect x="4" y="4" width="4.5" height="4.5" fill="none" stroke="#555" />
              <rect x="14.5" y="2.5" width="10" height="10" rx="2" fill="none" stroke="#777" />
              <path d="M17 5l5 5M22 5l-5 5" stroke="#333" strokeWidth="1.2" />
            </DockButtons>
          </DockTitle>
          <MapBar>Map</MapBar>
          <ScrollArea>
            <ScrollContent>
              <ExtentBox>
                {extent.map(([label, value]) => (
                  <ExtentRow key={label}>
                    <ExtentLabel>{label}</ExtentLabel>
                    <LineEdit $w={313}>{value}</LineEdit>
                    <DataDefined gap={10} />
                  </ExtentRow>
                ))}
                <PushButton>Set to map canvas extent</PushButton>
                <PushButton>View extent in map canvas</PushButton>
              </ExtentBox>
              <Group title="Controlled by atlas" check="off" dim dimBox />
              <Group title="Grids" />
              <Group title="Overviews" />
              <GroupHead $open>
                <ArrowSlot $open $focus />
                Position and size
              </GroupHead>
              <PosBox>
                <PosGrid>
                  <div>Page</div>
                  <Spin value="1" w={195} dimDown />
                  <div />
                  <div />
                  <div />
                  <div>X</div>
                  <Spin value="25,049" />
                  <DataDefined gap={9} />
                  <LockedPair />
                  <UnitCell><UnitCombo>mm</UnitCombo></UnitCell>
                  <div>Y</div>
                  <Spin value="34,213" />
                  <DataDefined gap={9} />
                  <div>Width</div>
                  <Spin value="246,903" />
                  <DataDefined gap={9} />
                  <LockedPair />
                  <UnitCell><UnitCombo>mm</UnitCombo></UnitCell>
                  <div>Height</div>
                  <Spin value="141,573" />
                  <DataDefined gap={9} />
                </PosGrid>
                <RefRow>
                  <RefLabel>Reference point</RefLabel>
                  <RadioGrid>
                    {radios.map(i => <Radio key={i} $on={i === 6} />)}
                  </RadioGrid>
                </RefRow>
              </PosBox>
              <Group title="Rotation" />
              <Group title="Frame" check="off" />
              <Group title="Background" check="on" />
              <Group title="Item ID" />
              <Group title="Rendering" />
              <GroupHead $open>
                <ArrowSlot $open />
                Variables
              </GroupHead>
              <VarBox />
            </ScrollContent>
            <VScroll $w={15}>
              <ScrollBtn />
              <ScrollTrough $h={218} />
              <ScrollTrough $thumb $h={411} />
              <ScrollTrough />
              <ScrollBtn $down />
            </VScroll>
          </ScrollArea>
        </SidePanel>
      </Main>

      <StatusBar>
        <CoordGroup>
          <Coord $gap={7}>x: 300.969 mm</Coord>
          <Coord $gap={7}>y: 169.564 mm</Coord>
          <Coord $gap={0}>page: 1</Coord>
        </CoordGroup>
        <ZoomCombo>
          <ZoomValue>98.5%</ZoomValue>
          <ZoomArrow />
        </ZoomCombo>
        <Slider />
      </StatusBar>
    </Window>
  );
}

export default App;
